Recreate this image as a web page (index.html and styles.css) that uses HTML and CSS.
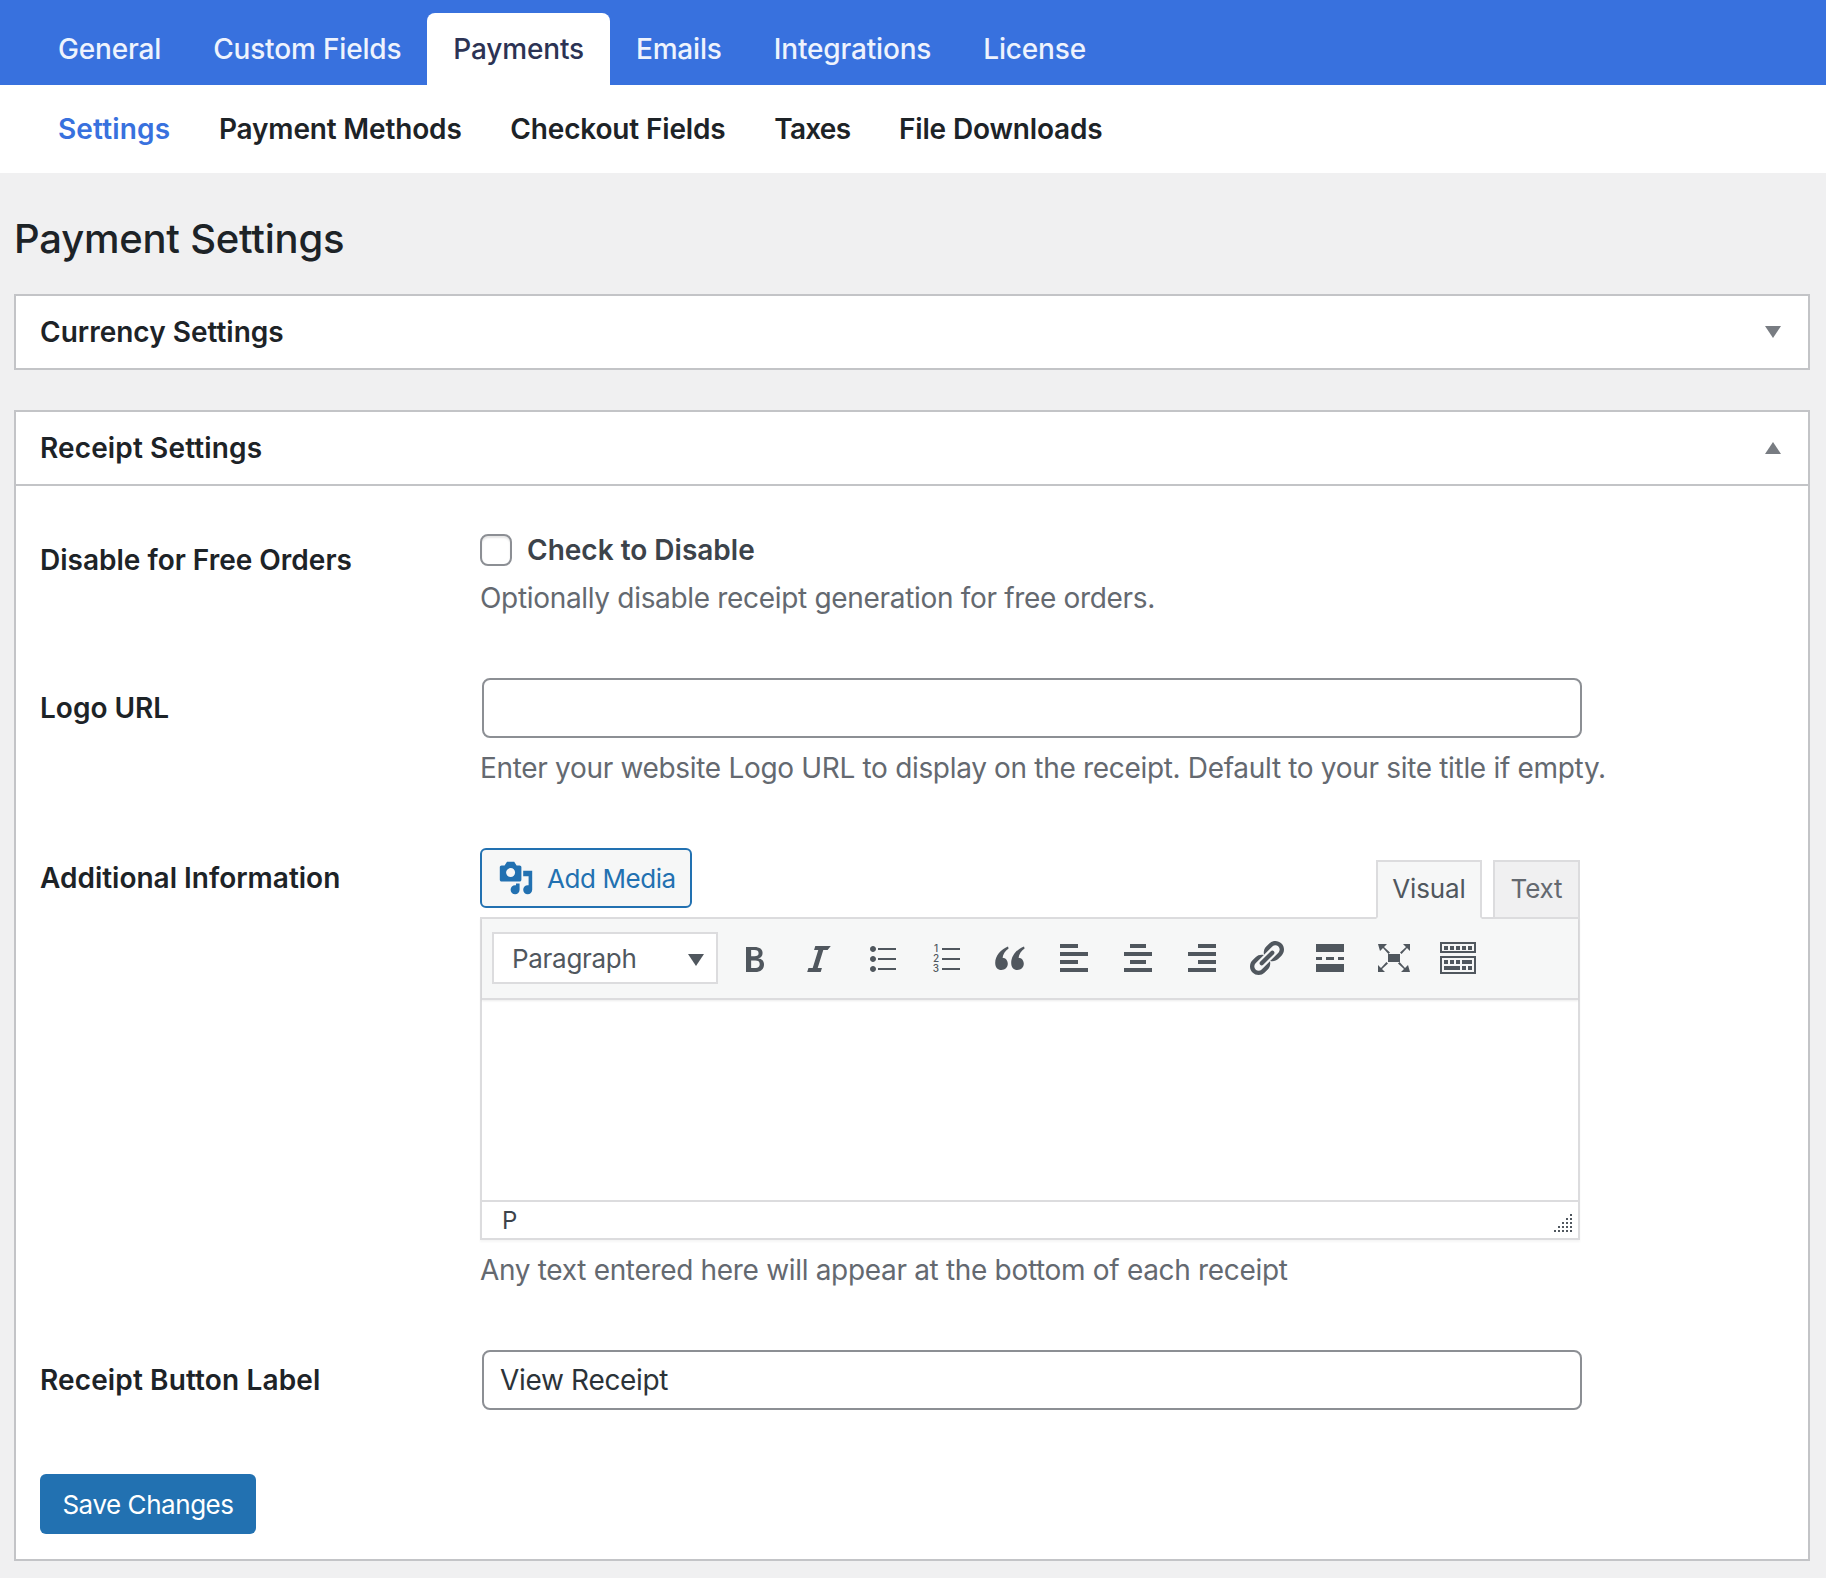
FILE: index.html
```html
<!DOCTYPE html>
<html lang="en">
<head>
<meta charset="utf-8">
<title>Payment Settings</title>
<link rel="stylesheet" href="styles.css">
</head>
<body>
<nav class="topnav">
  <a class="toptab">General</a>
  <a class="toptab">Custom Fields</a>
  <a class="toptab active">Payments</a>
  <a class="toptab">Emails</a>
  <a class="toptab">Integrations</a>
  <a class="toptab">License</a>
</nav>
<nav class="subnav">
  <a class="subtab active">Settings</a>
  <a class="subtab">Payment Methods</a>
  <a class="subtab">Checkout Fields</a>
  <a class="subtab kerned">Taxes</a>
  <a class="subtab">File Downloads</a>
</nav>
<main class="page">
  <h1 class="title">Payment Settings</h1>

  <section class="card">
    <header class="card-head">
      <h2 class="card-title">Currency Settings</h2>
      <svg class="toggle" viewBox="0 0 16 12"><path d="M0 0h16L8 12z"/></svg>
    </header>
  </section>

  <section class="card">
    <header class="card-head open">
      <h2 class="card-title loose">Receipt Settings</h2>
      <svg class="toggle" viewBox="0 0 16 12"><path d="M0 12h16L8 0z"/></svg>
    </header>
    <div class="card-body">
      <div class="row">
        <label class="row-label first">Disable for Free Orders</label>
        <div class="row-field">
          <label class="check">
            <span class="checkbox"></span>
            <span class="check-text">Check to Disable</span>
          </label>
          <p class="desc">Optionally disable receipt generation for free orders.</p>
        </div>
      </div>

      <div class="row">
        <label class="row-label">Logo URL</label>
        <div class="row-field">
          <div class="input"></div>
          <p class="desc">Enter your website Logo URL to display on the receipt. Default to your site title if empty.</p>
        </div>
      </div>

      <div class="row">
        <label class="row-label">Additional Information</label>
        <div class="row-field">
          <div class="editor-tools">
            <button class="media-btn" type="button">
              <svg class="media-icon" viewBox="0 0 20 20"><path d="M13 11V4c0-.55-.45-1-1-1h-1.670L9 1H5L3.670 3H2c-.55 0-1 .45-1 1v7c0 .55.45 1 1 1h10c.55 0 1-.45 1-1zM7 4.500c1.380 0 2.500 1.120 2.500 2.500S8.380 9.500 7 9.500 4.500 8.380 4.500 7 5.620 4.500 7 4.500zM14 6h5v10.500c0 1.380-1.120 2.500-2.500 2.500S14 17.880 14 16.500s1.120-2.500 2.500-2.500c.17 0 .34.020.5.050V9h-3V6zm-4 8.050V13h2v3.500c0 1.380-1.120 2.500-2.500 2.500S7 17.880 7 16.500 8.120 14 9.500 14c.17 0 .34.020.5.050z"/></svg>
              Add Media
            </button>
            <div class="mode-tabs">
              <span class="mode-tab current">Visual</span>
              <span class="mode-tab plain">Text</span>
            </div>
          </div>
          <div class="editor">
            <div class="toolbar">
              <div class="format-select">Paragraph<svg class="select-arrow" viewBox="0 0 16 12"><path d="M0 0h16L8 12z"/></svg></div>
              <span class="tool"><svg viewBox="0 0 20 20"><path fill-rule="evenodd" d="M6 4v13h4.540c1.370 0 2.460-.330 3.260-1 .800-.660 1.200-1.580 1.200-2.750 0-.840-.240-1.540-.720-2.100s-1.170-.870-2.080-.950v-.030c.670-.110 1.180-.400 1.540-.870.370-.470.550-1.050.550-1.750 0-1-.350-1.770-1.050-2.300-.700-.530-1.710-.800-3.050-.800H6zm2.570 5.150V6.040h1.650c.71 0 1.240.110 1.570.36.340.250.510.640.510 1.180 0 .530-.180.930-.530 1.200-.350.250-.880.370-1.590.37H8.570zm0 5.840v-3.790h1.980c.78 0 1.360.140 1.740.430.370.290.560.750.56 1.380 0 .660-.190 1.170-.580 1.490-.390.330-.980.490-1.770.49H8.570z"/></svg></span>
              <span class="tool"><svg viewBox="0 0 20 20"><path d="M14.780 6h-2.130l-2.800 9h2.120l-.620 2H4.600l.620-2h2.130l2.800-9H8.030l.620-2h7.750z"/></svg></span>
              <span class="tool"><svg viewBox="0 0 20 20"><path d="M5.500 7C4.670 7 4 6.330 4 5.500 4 4.680 4.670 4 5.500 4 6.320 4 7 4.680 7 5.500 7 6.330 6.320 7 5.500 7zM8 5h9v1H8V5zm-2.500 7c-.830 0-1.500-.670-1.500-1.500C4 9.680 4.670 9 5.500 9c.820 0 1.500.680 1.500 1.500 0 .830-.680 1.500-1.500 1.500zM8 10h9v1H8v-1zm-2.500 7c-.830 0-1.500-.670-1.500-1.500 0-.820.670-1.500 1.500-1.500.820 0 1.500.680 1.500 1.500 0 .830-.680 1.500-1.500 1.500zM8 15h9v1H8v-1z"/></svg></span>
              <span class="tool"><svg viewBox="0 0 20 20"><path d="M8 5h9v1H8V5zM8 10h9v1H8v-1zM8 15h9v1H8v-1z"/><text class="ol-digit" x="5" y="7">1</text><text class="ol-digit" x="5" y="12">2</text><text class="ol-digit" x="5" y="17">3</text></svg></span>
              <span class="tool"><svg viewBox="0 0 20 20"><path d="M9 4.200C5.500 5.500 2.600 8.800 2.600 12.500 2.600 14.700 3.900 16 5.700 16 7.500 16 8.900 14.700 8.900 12.900 8.900 11.200 7.800 10 6.300 9.900 6.500 8.100 7.500 6.500 9.300 5.200zM17 4.200C13.500 5.500 10.600 8.800 10.600 12.500 10.600 14.700 11.900 16 13.700 16 15.500 16 16.900 14.700 16.900 12.900 16.900 11.200 15.800 10 14.300 9.900 14.500 8.100 15.500 6.500 17.300 5.200z"/></svg></span>
              <span class="tool"><svg viewBox="0 0 20 20"><path d="M12 5V3H3v2h9zm5 4V7H3v2h14zm-5 4v-2H3v2h9zm5 4v-2H3v2h14z"/></svg></span>
              <span class="tool"><svg viewBox="0 0 20 20"><path d="M14 5V3H6v2h8zm3 4V7H3v2h14zm-3 4v-2H6v2h8zm3 4v-2H3v2h14z"/></svg></span>
              <span class="tool"><svg viewBox="0 0 20 20"><path d="M17 5V3H8v2h9zm0 4V7H3v2h14zm0 4v-2H8v2h9zm0 4v-2H3v2h14z"/></svg></span>
              <span class="tool"><svg viewBox="0 0 20 20"><path d="M17.740 2.760c1.680 1.690 1.680 4.410 0 6.100l-1.530 1.520c-1.120 1.120-2.700 1.470-4.140 1.090l2.620-2.610.76-.770.76-.760c.840-.840.840-2.200 0-3.040-.840-.850-2.200-.850-3.040 0l-.770.760-3.380 3.380c-.370-1.440-.020-3.020 1.100-4.140l1.520-1.530c1.690-1.680 4.420-1.680 6.100 0zM8.590 13.430l5.340-5.340c.420-.420.420-1.100 0-1.520-.440-.430-1.130-.400-1.530 0l-5.330 5.340c-.420.420-.420 1.100 0 1.520.440.430 1.130.400 1.520 0zm-.760 2.290l4.140-4.140c.380 1.440.030 3.020-1.090 4.140l-1.520 1.530c-1.690 1.680-4.410 1.680-6.100 0-1.680-1.680-1.680-4.420 0-6.100l1.530-1.520c1.120-1.120 2.700-1.470 4.140-1.100l-4.140 4.150c-.850.840-.850 2.200 0 3.050.840.840 2.200.840 3.040 0z"/></svg></span>
              <span class="tool"><svg viewBox="0 0 20 20"><path d="M17 7V3H3v4h14zM6 11V9.500H3V11h3zm6 0V9.500H8V11h4zm5 0V9.500h-3V11h3zm0 6v-4H3v4h14z"/></svg></span>
              <span class="tool"><svg viewBox="0 0 20 20"><path d="M7 8h6v4H7zM2 3h4.500L5 4.500 8 7.200 7.200 8 4.500 5 3 6.500zM18 3v3.500L16.500 5 13.800 8 13 7.200 16 4.500 14.500 3zM18 17h-4.500l1.500-1.500-3-2.700.8-.8 2.700 3 1.500-1.500zM2 17v-3.500L3.500 15l2.700-3 .8.8L4 15.500 5.500 17z"/></svg></span>
              <span class="tool"><svg viewBox="0 0 20 20"><path fill-rule="evenodd" d="M1 2h18v5.500H1zm1 1v3.500h16V3zM1 9h18v9H1zm1 1v7h16v-7z"/><path d="M3 4h2v2H3zm3 0h2v2H6zm3 0h2v2H9zm3 0h2v2h-2zm3 0h2v2h-2zM3 11h2v2H3zm3 0h2v2H6zm3 0h2v2H9zm3 0h5v2h-5zM3 14h8v2H3zm9 0h2v2h-2zm3 0h2v2h-2z"/></svg></span>
            </div>
            <div class="editor-area"></div>
            <div class="statusbar">
              <span>P</span>
              <svg class="resize" viewBox="0 0 18 18"><path d="M16 0h2v2h-2zM16 4h2v2h-2zM12 4h2v2h-2zM16 8h2v2h-2zM12 8h2v2h-2zM8 8h2v2H8zM16 12h2v2h-2zM12 12h2v2h-2zM8 12h2v2H8zM4 12h2v2H4zM16 16h2v2h-2zM12 16h2v2h-2zM8 16h2v2H8zM4 16h2v2H4zM0 16h2v2H0z"/></svg>
            </div>
          </div>
          <p class="desc">Any text entered here will appear at the bottom of each receipt</p>
        </div>
      </div>

      <div class="row">
        <label class="row-label loose">Receipt Button Label</label>
        <div class="row-field">
          <div class="input">View Receipt</div>
        </div>
      </div>

      <button class="save" type="button">Save Changes</button>
    </div>
  </section>
</main>
</body>
</html>
```
FILE: styles.css
```css
* { box-sizing: border-box; }
html, body { margin: 0; padding: 0; }
body {
  background: #f0f0f1;
  font-family: Inter, "Liberation Sans", sans-serif;
  color: #1d2327;
  font-size: 28px;
}
.topnav {
  display: flex;
  height: 85px;
  padding-left: 32px;
  background: #3871de;
}
.toptab {
  display: flex;
  align-items: center;
  height: 72px;
  margin-top: 13px;
  padding: 0 26px;
  color: #eef3fd;
  font-size: 28px;
  font-weight: 500;
  letter-spacing: -0.17px;
  border-radius: 8px 8px 0 0;
}
.toptab.active { background: #fff; color: #2c3354; }
.subnav {
  display: flex;
  align-items: center;
  gap: 48.7px;
  height: 88px;
  padding-left: 58px;
  background: #fff;
}
.subtab { font-size: 28px; font-weight: 600; letter-spacing: -0.16px; color: #1d2327; }
.subtab.active { color: #3871de; letter-spacing: 0.15px; }
.subtab.kerned { letter-spacing: -0.75px; }
.page { padding: 0 16px 17px 14px; }
.title {
  margin: 0;
  padding: 41px 0 30px;
  font-size: 40px;
  line-height: 50px;
  font-weight: 500;
  letter-spacing: -0.22px;
  color: #1d2327;
}
.card {
  margin-bottom: 40px;
  background: #fff;
  border: 2px solid #c3c4c7;
}
.card:last-child { margin-bottom: 0; }
.card-head {
  display: flex;
  align-items: center;
  justify-content: space-between;
  height: 72px;
  padding: 0 24px;
}
.card-head.open { height: 74px; border-bottom: 2px solid #c3c4c7; }
.card-title { margin: 0; font-size: 28px; font-weight: 600; color: #1d2327; }
.toggle { width: 16px; height: 12px; fill: #787c82; margin-right: 3px; }
.card-body { padding: 48px 24px 25px; }
.row {
  display: grid;
  grid-template-columns: 440px 1fr;
  margin-bottom: 60px;
}
.row-label {
  padding-top: 10px;
  font-size: 28px;
  line-height: 40px;
  font-weight: 600;
  color: #1d2327;
}
.row-label.first { padding-top: 6px; }
.loose { letter-spacing: 0.13px; }
.row-field { min-width: 0; }
.check { display: flex; align-items: center; gap: 15px; height: 32px; }
.checkbox {
  width: 32px;
  height: 32px;
  background: #fff;
  border: 2px solid #8c8f94;
  border-radius: 8px;
  box-shadow: inset 0 2px 2px rgba(0,0,0,.1);
}
.check-text { font-size: 28px; font-weight: 600; color: #3c434a; }
.desc {
  margin: 12px 0 0;
  font-size: 28px;
  line-height: 40px;
  letter-spacing: -0.32px;
  color: #646970;
}
.input + .desc { margin-top: 10px; }
.editor + .desc { margin-top: 10px; }
.input {
  display: flex;
  align-items: center;
  width: 1100px;
  height: 60px;
  margin-left: 2px;
  padding: 0 16px;
  background: #fff;
  border: 2px solid #8c8f94;
  border-radius: 8px;
  font-size: 28px;
  letter-spacing: -0.32px;
  color: #2c3338;
}
.editor-tools {
  display: flex;
  align-items: flex-end;
  justify-content: space-between;
  width: 1100px;
  margin-bottom: -2px;
  position: relative;
  z-index: 1;
}
.media-btn {
  display: flex;
  align-items: center;
  gap: 13px;
  width: 212px;
  height: 60px;
  margin-bottom: 11px;
  padding: 0 0 0 16px;
  background: #f6f7f7;
  border: 2px solid #2271b1;
  border-radius: 6px;
  font: 400 26px Inter, "Liberation Sans", sans-serif;
  letter-spacing: -0.42px;
  color: #2271b1;
}
.media-icon { width: 36px; height: 36px; fill: #2271b1; flex: none; }
.mode-tabs { display: flex; gap: 11px; }
.mode-tab {
  display: flex;
  align-items: center;
  justify-content: center;
  width: 106px;
  height: 59px;
  padding-bottom: 2px;
  background: #f0f0f1;
  border: 2px solid #dcdcde;
  font-size: 26px;
  letter-spacing: -0.15px;
  color: #646970;
}
.mode-tab.plain { width: 87px; }
.mode-tab.current {
  background: #f6f7f7;
  border-bottom-color: #f6f7f7;
  color: #50575e;
}
.editor {
  width: 1100px;
  border: 2px solid #dcdcde;
  box-shadow: 0 2px 2px rgba(0,0,0,.04);
}
.toolbar {
  display: flex;
  align-items: center;
  height: 81px;
  padding: 13px 10px 14px;
  background: #f6f7f7;
  border-bottom: 2px solid #dcdcde;
  box-shadow: 0 1px 2px rgba(0,0,0,.08);
  position: relative;
}
.format-select {
  display: flex;
  align-items: center;
  justify-content: space-between;
  width: 226px;
  height: 52px;
  margin-right: 4px;
  padding: 0 12px 0 18px;
  background: #fff;
  border: 2px solid #dcdcde;
  font-size: 26px;
  letter-spacing: -0.3px;
  color: #50575e;
}
.select-arrow { width: 16px; height: 12px; margin-top: 4px; fill: #50575e; }
.tool {
  display: flex;
  justify-content: center;
  width: 64px;
  flex: none;
}
.tool svg { width: 40px; height: 40px; fill: #50575e; }
.ol-digit {
  font-family: Inter, "Liberation Sans", sans-serif;
  font-size: 5px;
  font-weight: 500;
  text-anchor: middle;
  fill: #50575e;
}
.editor-area { height: 200px; background: #fff; }
.statusbar {
  display: flex;
  align-items: center;
  justify-content: space-between;
  height: 38px;
  padding: 0 6px 0 20px;
  background: #fff;
  border-top: 2px solid #dcdcde;
  font-size: 24px;
  color: #3c434a;
}
.resize { width: 18px; height: 18px; margin-top: 6px; fill: #50575e; }
.save {
  display: block;
  width: 216px;
  height: 60px;
  margin-top: 64px;
  padding: 0;
  background: #2271b1;
  border: 0;
  border-radius: 6px;
  font: 400 26px Inter, "Liberation Sans", sans-serif;
  letter-spacing: -0.45px;
  color: #fff;
}
.row:last-of-type { margin-bottom: 0; }
```
